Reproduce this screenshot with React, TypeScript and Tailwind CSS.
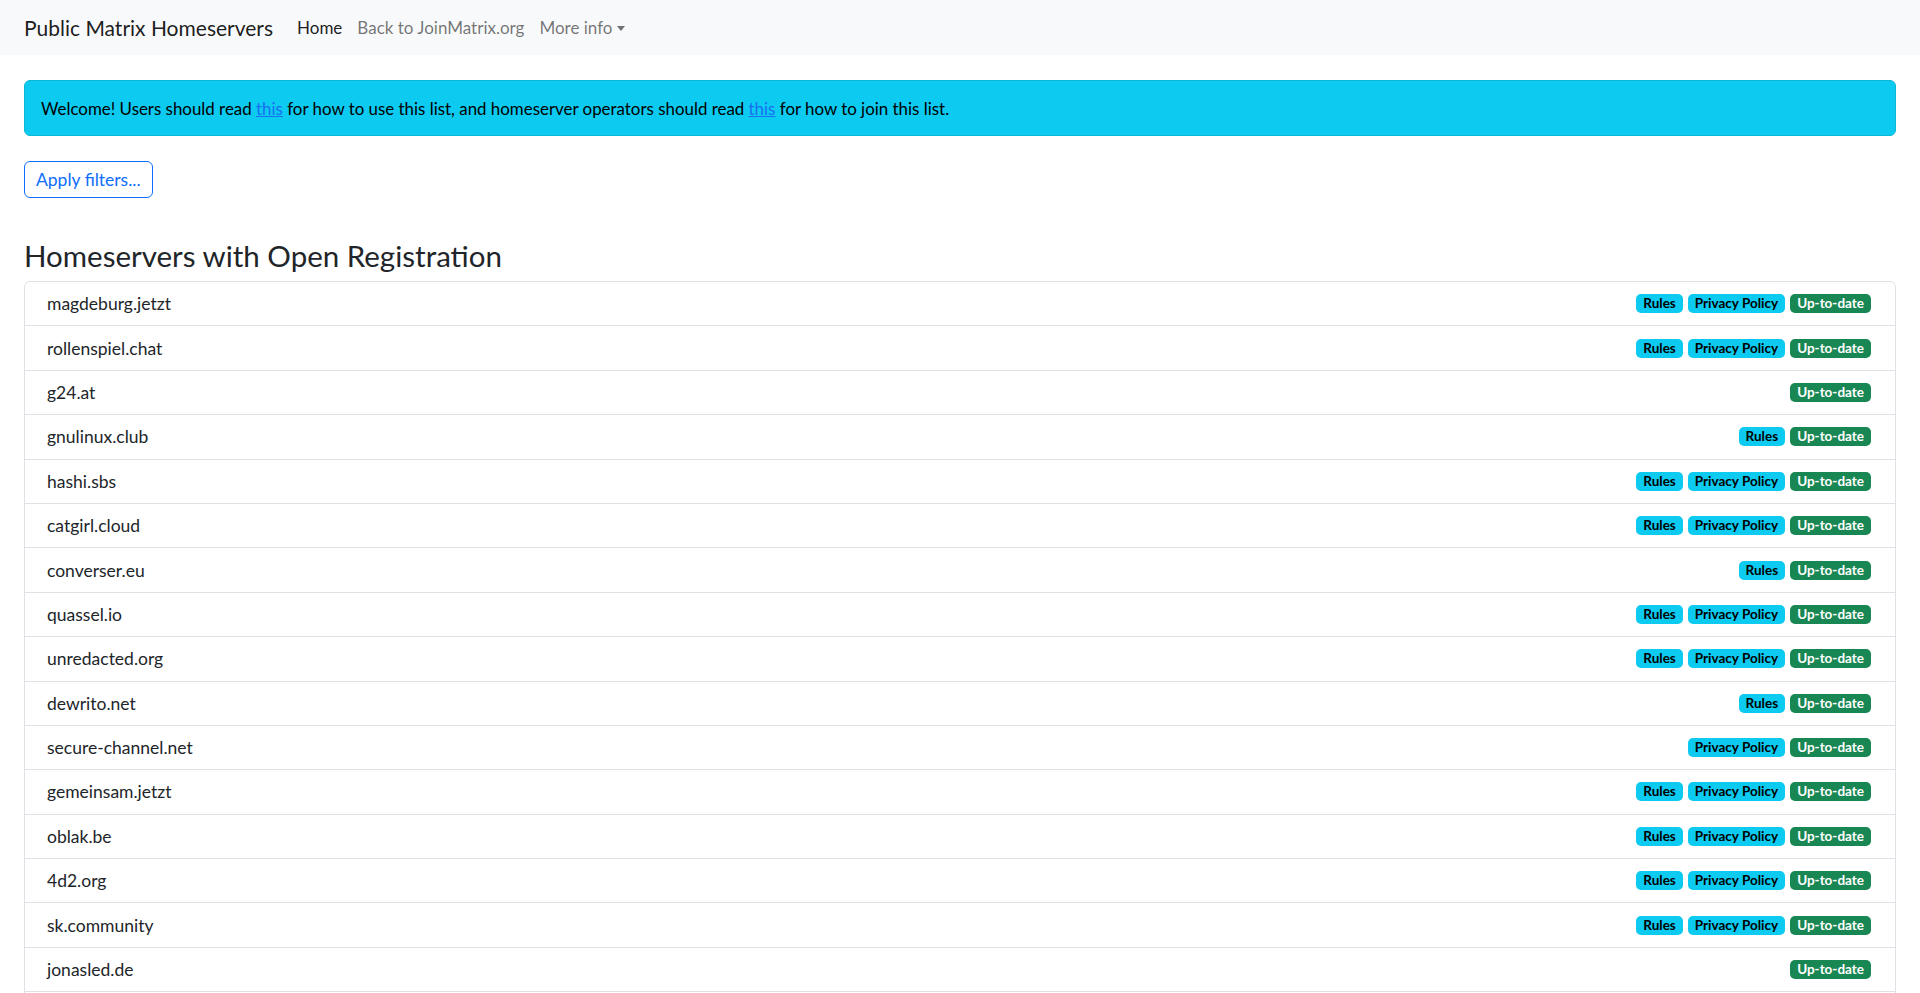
import { useState } from 'react';

type Server = { name: string; rules?: boolean; privacy?: boolean };

const servers: Server[] = [
  { name: 'magdeburg.jetzt', rules: true, privacy: true },
  { name: 'rollenspiel.chat', rules: true, privacy: true },
  { name: 'g24.at' },
  { name: 'gnulinux.club', rules: true },
  { name: 'hashi.sbs', rules: true, privacy: true },
  { name: 'catgirl.cloud', rules: true, privacy: true },
  { name: 'converser.eu', rules: true },
  { name: 'quassel.io', rules: true, privacy: true },
  { name: 'unredacted.org', rules: true, privacy: true },
  { name: 'dewrito.net', rules: true },
  { name: 'secure-channel.net', privacy: true },
  { name: 'gemeinsam.jetzt', rules: true, privacy: true },
  { name: 'oblak.be', rules: true, privacy: true },
  { name: '4d2.org', rules: true, privacy: true },
  { name: 'sk.community', rules: true, privacy: true },
  { name: 'jonasled.de' },
  { name: 'tchncs.de', rules: true, privacy: true },
  { name: 'envs.net', rules: true, privacy: true },
];

function Badge({ tone, children }: { tone: 'info' | 'success'; children: string }) {
  return (
    <span
      className={
        tone === 'info'
          ? 'inline-flex h-[19px] items-center rounded-[5px] bg-[#0dcaf0] px-[7px] text-[13.5px] font-bold text-black'
          : 'inline-flex h-[19px] items-center rounded-[5px] bg-[#198754] px-[7px] text-[13.5px] font-bold text-white'
      }
    >
      {children}
    </span>
  );
}

export default function App() {
  const [menuOpen, setMenuOpen] = useState(false);

  return (
    <div className="min-h-screen bg-white text-[17.5px] leading-[27px] text-[#212529]" style={{ fontFamily: 'Lato, "Open Sans", sans-serif' }}>
      <nav className="flex h-[55px] items-center bg-[#f8f9fa] px-6">
        <a className="mr-[24px] text-[21px] text-black/90" href="#">Public Matrix Homeservers</a>
        <div className="flex items-center gap-[15px] text-[17px]">
          <a className="text-black/90" href="#">Home</a>
          <a className="text-black/55" href="#">Back to JoinMatrix.org</a>
          <button className="flex items-center gap-[4px] text-black/55" onClick={() => setMenuOpen(!menuOpen)} type="button">
            More info
            <span className="mt-[2px] h-0 w-0 border-x-[4px] border-t-[5px] border-x-transparent border-t-current" />
          </button>
        </div>
      </nav>

      <main className="px-6 pt-[25px]">
        <div className="flex h-[56px] items-center rounded-[6px] border border-[#0bb6d8] bg-[#0dcaf0] px-4 text-[16.9px] text-black">
          <p>
            Welcome! Users should read <a className="text-[#1a6ff0] underline" href="#">this</a> for how to use this list, and homeserver operators should read{' '}
            <a className="text-[#1a6ff0] underline" href="#">this</a> for how to join this list.
          </p>
        </div>

        <button className="mt-[25px] h-[37px] rounded-[6px] border border-[#0d6efd] px-[11px] text-[17.5px] text-[#0d6efd]" type="button">
          Apply filters...
        </button>

        <h2 className="mt-[39px] mb-[6px] text-[29.5px] leading-[38px] font-normal text-[#212529]">Homeservers with Open Registration</h2>

        <ul className="rounded-[6px] border border-[#dee2e6]">
          {servers.map((server, index) => (
            <li key={server.name} className={index === 0 ? 'flex h-[43.4px] items-center justify-between pl-[22px] pr-6' : 'flex h-[44.4px] items-center justify-between border-t border-[#dee2e6] pl-[22px] pr-6'}>
              <span>{server.name}</span>
              <span className="flex items-center gap-[5px]">
                {server.rules ? <Badge tone="info">Rules</Badge> : null}
                {server.privacy ? <Badge tone="info">Privacy Policy</Badge> : null}
                <Badge tone="success">Up-to-date</Badge>
              </span>
            </li>
          ))}
        </ul>
      </main>
    </div>
  );
}
